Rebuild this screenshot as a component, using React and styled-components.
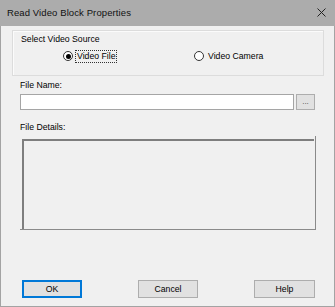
import React from 'react';
import styled, { createGlobalStyle } from 'styled-components';

const GlobalStyle = createGlobalStyle`
  html, body {
    margin: 0;
    padding: 0;
    background: #f0f0f0;
  }
  body {
    font-family: "Liberation Sans", Arial, sans-serif;
    font-size: 8.7px;
    color: #000;
  }
`;

const Window = styled.div`
  width: 335px;
  height: 307px;
  box-sizing: border-box;
  border: 1px solid #a3a3a3;
  border-top: none;
  background: #f0f0f0;
  display: flex;
  flex-direction: column;
`;

const TitleBar = styled.div`
  height: 25px;
  margin: 0 -1px;
  background: #acacac;
  display: flex;
  align-items: center;
  justify-content: space-between;
  padding: 0 9px 1px 7px;
  flex-shrink: 0;
`;

const Title = styled.span`
  font-size: 9.5px;
  color: #111;
  letter-spacing: 0.1px;
`;

const CloseIcon = () => (
  <svg width="9" height="9" viewBox="0 0 9 9">
    <path d="M0.5 0.5 L8.5 8.5 M8.5 0.5 L0.5 8.5" stroke="#222" strokeWidth="1" />
  </svg>
);

const GroupBox = styled.div`
  margin: 4px 10px 0 11px;
  height: 46px;
  box-sizing: border-box;
  border: 1px solid #dcdcdc;
  box-shadow: inset 1px 1px 0 #fbfbfb;
  padding: 3px 0 0 8px;
`;

const GroupLabel = styled.div`
  line-height: 11px;
`;

const RadioRow = styled.div`
  display: grid;
  grid-template-columns: 131px auto;
  padding-left: 42px;
  margin-top: 5px;
`;

const RadioOption = styled.label`
  display: flex;
  align-items: center;
  gap: 3px;
  height: 12px;
`;

const RadioCircle = styled.span`
  width: 10px;
  height: 10px;
  box-sizing: border-box;
  border-radius: 50%;
  border: 1px solid #333;
  background: #fff;
  display: flex;
  align-items: center;
  justify-content: center;
  &::after {
    content: '';
    width: 5px;
    height: 5px;
    border-radius: 50%;
    background: ${(p) => (p.checked ? '#000' : 'transparent')};
  }
`;

const RadioText = styled.span`
  padding: 0 1px;
  line-height: 11px;
  outline: ${(p) => (p.focused ? '1px dotted #333' : 'none')};
`;

const FieldLabel = styled.div`
  margin: ${(p) => p.top}px 0 0 19px;
  line-height: 11px;
  height: 11px;
`;

const InputRow = styled.div`
  display: flex;
  gap: 2px;
  margin: 3px 0 0 19px;
  height: 16px;
`;

const TextInput = styled.div`
  width: 274px;
  box-sizing: border-box;
  background: #fff;
  border: 1px solid #a5a5a5;
`;

const BrowseButton = styled.div`
  width: 19px;
  box-sizing: border-box;
  background: #e1e1e1;
  border: 1px solid #adadad;
  display: flex;
  align-items: flex-end;
  justify-content: center;
  font-size: 8px;
  line-height: 10px;
  color: #444;
  padding-bottom: 2px;
`;

const DetailsFrame = styled.div`
  margin: 3px 0 0 19px;
  width: 296px;
  height: 94px;
  box-sizing: border-box;
  border-right: 1px solid #8a8a8a;
  border-bottom: 1px solid #8a8a8a;
  padding: 3px 1px 0 2px;
  display: flex;
`;

const DetailsArea = styled.div`
  flex: 1;
  border-top: 2px solid #7e7e7e;
  border-left: 2px solid #7e7e7e;
  background: #f0f0f0;
`;

const ButtonRow = styled.div`
  display: flex;
  justify-content: space-between;
  margin: 50px 19px 0 21px;
`;

const Button = styled.div`
  width: ${(p) => p.w || 60}px;
  height: 18px;
  box-sizing: border-box;
  background: #e1e1e1;
  border: 1px solid ${(p) => (p.primary ? '#0078d7' : '#adadad')};
  box-shadow: ${(p) => (p.primary ? 'inset 0 0 0 1px #0078d7' : 'none')};
  display: flex;
  align-items: center;
  justify-content: center;
  line-height: 11px;
`;

export default function App() {
  return (
    <>
      <GlobalStyle />
      <Window>
        <TitleBar>
          <Title>Read Video Block Properties</Title>
          <CloseIcon />
        </TitleBar>
        <GroupBox>
          <GroupLabel>Select Video Source</GroupLabel>
          <RadioRow>
            <RadioOption>
              <RadioCircle checked />
              <RadioText focused>Video File</RadioText>
            </RadioOption>
            <RadioOption>
              <RadioCircle />
              <RadioText>Video Camera</RadioText>
            </RadioOption>
          </RadioRow>
        </GroupBox>
        <FieldLabel top={4}>File Name:</FieldLabel>
        <InputRow>
          <TextInput />
          <BrowseButton>...</BrowseButton>
        </InputRow>
        <FieldLabel top={12}>File Details:</FieldLabel>
        <DetailsFrame>
          <DetailsArea />
        </DetailsFrame>
        <ButtonRow>
          <Button primary>OK</Button>
          <Button>Cancel</Button>
          <Button w={61}>Help</Button>
        </ButtonRow>
      </Window>
    </>
  );
}
